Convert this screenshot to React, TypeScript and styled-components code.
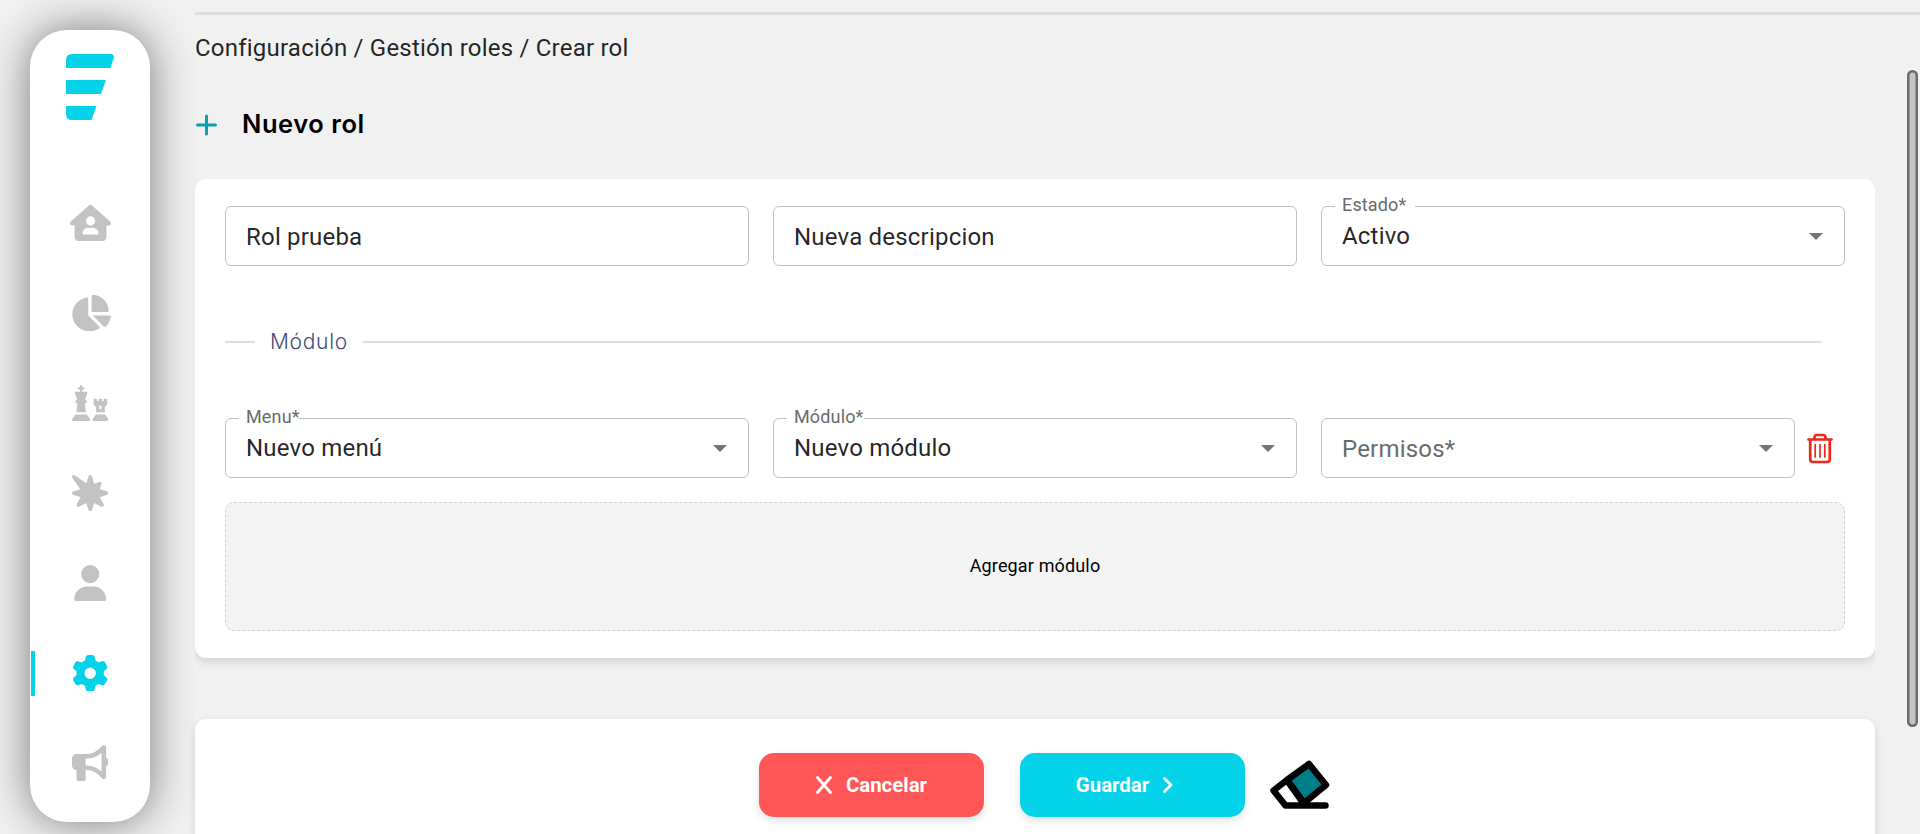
import React from 'react';
import styled, { createGlobalStyle } from 'styled-components';
import { FaHouseUser, FaChartPie, FaChess, FaBurst, FaUser, FaGear, FaBullhorn } from 'react-icons/fa6';

const Global = createGlobalStyle`
  * { box-sizing: border-box; }
  body { margin: 0; background: #f1f1f1; font-family: Roboto, sans-serif; color: rgba(0,0,0,.87); overflow: hidden; }
`;

const Page = styled.div`
  display: flex;
  height: 834px;
  overflow: hidden;
  background: #f1f1f1;
`;

const Sidebar = styled.nav`
  flex: none;
  width: 120px;
  height: 792px;
  margin: 30px 45px 0 30px;
  border-radius: 37px;
  background: #fff;
  box-shadow: 0 0 45px rgba(0, 0, 0, 0.5);
  display: flex;
  flex-direction: column;
  align-items: stretch;
`;

const Logo = styled.svg`
  display: block;
  margin: 24px auto 58px;
  flex: none;
`;

const NavItem = styled.a<{ $active?: boolean; $wide?: boolean }>`
  height: 45px;
  margin: 22.5px 1px;
  display: flex;
  align-items: center;
  justify-content: center;
  color: ${p => (p.$active ? '#04d2e9' : '#c3c3c3')};
  border-left: 4px solid ${p => (p.$active ? '#04d2e9' : 'transparent')};
  padding-right: 4px;

  svg { flex: none; width: ${p => (p.$wide ? 41 : 36.4)}px; height: 36.4px; }
`;

const Main = styled.main`
  flex: none;
  width: 1725px;
  position: relative;
  padding: 12px 0 0;
  background: #f1f1f1;
`;

const Rule = styled.hr`
  margin: 0;
  border: 0;
  height: 3px;
  background: #dedede;
`;

const Breadcrumb = styled.div`
  margin-top: 17px;
  height: 32px;
  line-height: 32px;
  font-size: 24px;
  letter-spacing: 0.22px;
`;

const Heading = styled.div`
  display: flex;
  align-items: center;
  gap: 25px;
  height: 40px;
  margin: 40px 0 35px;
`;

const PlusIcon = styled.svg`
  margin-top: 2px;
`;

const Title = styled.h1`
  margin: 0;
  font: 600 25.5px/38px Inter, sans-serif;
  letter-spacing: 0.55px;
  color: #000;
`;

const Card = styled.section`
  width: 1680px;
  background: #fff;
  border-radius: 11px;
  box-shadow: 0 4px 9px rgba(0, 0, 0, 0.12);
`;

const FormCard = styled(Card)`
  height: 479px;
  padding: 27px 30px;
  clip-path: inset(0 0 -20px 0);
`;

const Row = styled.div`
  display: flex;
  gap: 24px;
`;

const Field = styled.div<{ $w?: number }>`
  position: relative;
  flex: none;
  width: ${p => p.$w ?? 524}px;
  height: 60px;
  padding: 0 21px 0 20px;
  border: 1px solid #c1c1c1;
  border-radius: 6px;
  display: flex;
  align-items: center;
  justify-content: space-between;
  font-size: 24px;
  letter-spacing: 0.2px;
`;

const Label = styled.span<{ $gap: number }>`
  position: absolute;
  top: -14px;
  left: 13px;
  width: ${p => p.$gap}px;
  padding-left: 7px;
  background: #fff;
  font-size: 18px;
  line-height: 24px;
  letter-spacing: 0.15px;
  color: #6b6b6b;
  white-space: nowrap;
`;

const InputText = styled.span<{ $muted?: boolean }>`
  padding-top: 2px;
  color: ${p => (p.$muted ? '#6b6b6b' : 'inherit')};
`;

const Value = styled.span`
  padding-bottom: 1px;
`;

const Caret = styled.span`
  border: 7.5px solid transparent;
  border-top-color: #757575;
  border-bottom: 0;
`;

const Divider = styled.div`
  display: flex;
  align-items: center;
  gap: 15px;
  width: 1596px;
  height: 30px;
  margin: 61px 0 61px;
  font: 300 21px/30px Inter, sans-serif;
  letter-spacing: 0.7px;
  color: #3f4c7c;

  &::before, &::after { content: ''; height: 1.5px; background: #dedede; }
  &::before { width: 30px; }
  &::after { flex: 1; }
`;

const TrashButton = styled.button`
  padding: 0;
  margin: 0 0 0 -12px;
  border: 0;
  background: none;
  display: flex;
  align-items: center;
`;

const AddModule = styled.button`
  display: block;
  width: 1620px;
  height: 129px;
  margin-top: 24px;
  padding: 0 0 3px;
  border: 1px dashed #cfd2d6;
  border-radius: 9px;
  background: #f4f4f4;
  font: 400 18px Roboto, sans-serif;
  letter-spacing: 0.15px;
  color: #000;
`;

const ActionsCard = styled(Card)`
  height: 160px;
  margin-top: 61px;
  padding-top: 34px;
  display: flex;
  align-items: flex-start;
  padding-left: 564px;
`;

const Button = styled.button<{ $bg: string; $right: number; $shift: number }>`
  width: 225px;
  height: 64px;
  margin-right: ${p => p.$right}px;
  padding: 0 ${p => p.$shift}px 0 0;
  border: 0;
  border-radius: 15px;
  background: ${p => p.$bg};
  box-shadow: 0 4px 9px rgba(0, 0, 0, 0.12);
  color: #fff;
  font: 700 20.4px Roboto, sans-serif;
  display: flex;
  align-items: center;
  justify-content: center;
  gap: 14px;
`;

const EraserIcon = styled.svg`
  margin-top: 7px;
`;

const Scrollbar = styled.div`
  position: absolute;
  right: 2px;
  top: 70px;
  width: 11.5px;
  height: 657px;
  border-radius: 6px;
  background: #c4c4c4;
  box-shadow: inset 0 0 0 2.5px #6b6b6b, 0 0 0 1px #f8f8f8;
`;

const navItems = [
  { Icon: FaHouseUser, wide: true },
  { Icon: FaChartPie, wide: true },
  { Icon: FaChess },
  { Icon: FaBurst },
  { Icon: FaUser },
  { Icon: FaGear, active: true },
  { Icon: FaBullhorn },
];

export default function App() {
  return (
    <Page>
      <Global />
      <Sidebar>
        <Logo width="48" height="66" viewBox="0 0 48 66" fill="#04d2e9">
          <path d="M6 0h38.500q4.500 0 3 4.500L44.500 14H0V6Q0 0 6 0zM0 26h40l-5 14H0zM0 52h30.500l-5 14H6q-6 0-6-6z" />
        </Logo>
        {navItems.map(({ Icon, wide, active }, i) => (
          <NavItem key={i} $active={active} $wide={wide}><Icon /></NavItem>
        ))}
      </Sidebar>
      <Main>
        <Rule />
        <Breadcrumb>Configuración / Gestión roles / Crear rol</Breadcrumb>
        <Heading>
          <PlusIcon width="22" height="22" viewBox="0 0 22 22" stroke="#0b9fb0" strokeWidth="3" strokeLinecap="round"><path d="M11.500 2v18M2.500 11h18" /></PlusIcon>
          <Title>Nuevo rol</Title>
        </Heading>
        <FormCard>
          <Row>
            <Field><InputText>Rol prueba</InputText></Field>
            <Field><InputText>Nueva descripcion</InputText></Field>
            <Field><Label $gap={80}>Estado*</Label><Value>Activo</Value><Caret /></Field>
          </Row>
          <Divider>Módulo</Divider>
          <Row>
            <Field><Label $gap={60}>Menu*</Label><Value>Nuevo menú</Value><Caret /></Field>
            <Field><Label $gap={77}>Módulo*</Label><Value>Nuevo módulo</Value><Caret /></Field>
            <Field $w={474}><InputText $muted>Permisos*</InputText><Caret /></Field>
            <TrashButton>
              <svg width="26" height="31" viewBox="0 0 26 31" fill="none" stroke="#ea2a17" strokeLinecap="round" strokeLinejoin="round">
                <path d="M1.500 6.500h23M3.200 7v19q0 3 3 3h13.600q3 0 3-3V7M7.500 6V4.500q0-2.500 2.500-2.500h6q2.500 0 2.500 2.500V6" strokeWidth="2.700" />
                <path d="M8.200 11.500v12.500M13 11.500v12.500M17.800 11.500v12.500" strokeWidth="1.700" />
              </svg>
            </TrashButton>
          </Row>
          <AddModule>Agregar módulo</AddModule>
        </FormCard>
        <ActionsCard>
          <Button $bg="#ff5757" $right={36} $shift={0}>
            <svg width="16" height="18" viewBox="0 0 16 18" stroke="#fff" strokeWidth="2.700" strokeLinecap="round"><path d="M1.500 1.500l13 15M14.500 1.500l-13 15" /></svg>
            Cancelar
          </Button>
          <Button $bg="#04d2e9" $right={25} $shift={16}>
            Guardar
            <svg width="10" height="16" viewBox="0 0 10 16" fill="none" stroke="#fff" strokeWidth="2.800" strokeLinecap="round" strokeLinejoin="round"><path d="M1.500 1.500L8 8l-6.500 6.500" /></svg>
          </Button>
          <EraserIcon width="60" height="50" viewBox="0 0 60 50" stroke="#000" strokeWidth="6.500" strokeLinejoin="round" strokeLinecap="round">
            <path d="M17 20L39 4l17 21-22 18z" fill="#007d8b" />
            <path d="M17 20L3.500 30.500l12 15h40M17 20l17 24" fill="none" />
          </EraserIcon>
        </ActionsCard>
        <Scrollbar />
      </Main>
    </Page>
  );
}
